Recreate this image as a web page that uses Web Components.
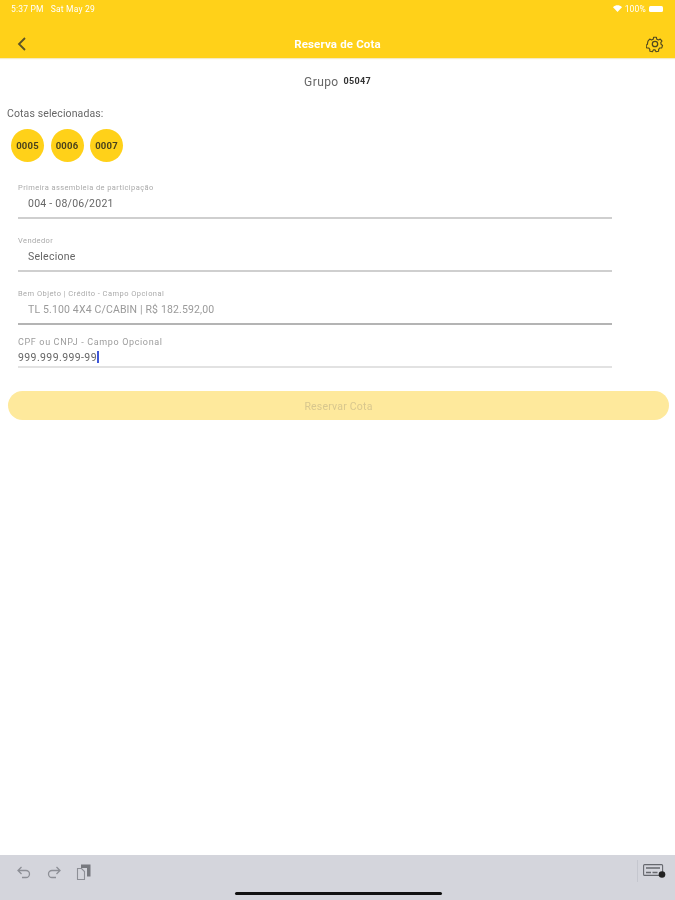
<!DOCTYPE html>
<html lang="pt-BR">
<head>
<meta charset="utf-8">
<title>Reserva de Cota</title>
<style>
  html, body { margin: 0; height: 100%; background: #fff; }
  body { font-family: Roboto, "Liberation Sans", sans-serif; }
</style>
</head>
<body>
<reserva-page>
  <status-bar slot="top"></status-bar>
  <nav-bar slot="top" title="Reserva de Cota"></nav-bar>

  <grupo-title numero="05047"></grupo-title>
  <cotas-list>
    <cota-chip>0005</cota-chip>
    <cota-chip>0006</cota-chip>
    <cota-chip>0007</cota-chip>
  </cotas-list>

  <form-field label="Primeira assembleia de participação" value="004 - 08/06/2021"></form-field>
  <form-field label="Vendedor" value="Selecione" style="--top: 16px"></form-field>
  <form-field label="Bem Objeto | Crédito - Campo Opcional" value="TL 5.100 4X4 C/CABIN | R$ 182.592,00"
    style="--top: 16px; --value-color: #9a9a9a; --value-ls: .15px; --line-color: #b4b4b4; --label-ls: .45px"></form-field>
  <form-field label="CPF ou CNPJ - Campo Opcional" value="999.999.999-99" editing
    style="--top: 12px; --label-size: 9px; --label-ls: .65px; --label-color: #9c9c9c; --value-left: 18px; --value-ls: .4px; --line-color: #e2e2e2; --gap: 3px; --bottom: 1px"></form-field>

  <reserve-button>Reservar Cota</reserve-button>

  <keyboard-bar slot="bottom"></keyboard-bar>
</reserva-page>

<script>
class ReservaPage extends HTMLElement {
  constructor() {
    super();
    this.attachShadow({ mode: "open" });
    this.shadowRoot.innerHTML = `
      <style>
        :host { display: flex; flex-direction: column; height: 900px; overflow: hidden; background: #fff; color: #444; filter: blur(.4px); }
        header { background: #ffd119; height: 58px; box-shadow: 0 1px 1px rgba(240, 225, 170, .7); display: flex; flex-direction: column; }
        main { flex: 1; display: flex; flex-direction: column; }
      </style>
      <header><slot name="top"></slot></header>
      <main><slot></slot></main>
      <slot name="bottom"></slot>
    `;
  }
}

class StatusBar extends HTMLElement {
  constructor() {
    super();
    this.attachShadow({ mode: "open" });
    this.shadowRoot.innerHTML = `
      <style>
        :host { display: flex; justify-content: space-between; align-items: center; height: 17px; margin-bottom: 13px; padding: 0 12px 0 11px; color: #fff; font-size: 8.5px; letter-spacing: .2px; }
        div { display: flex; align-items: center; gap: 7px; }
        .right { gap: 3px; }
        .battery { width: 14px; height: 6px; background: #fff; border-radius: 1.5px; }
      </style>
      <div><span>5:37 PM</span><span>Sat May 29</span></div>
      <div class="right">
        <svg width="9" height="7" viewBox="0 0 9 7"><path d="M0 2.2C2.6-.4 6.4-.4 9 2.2L4.5 7z" fill="#fff"/></svg>
        <span>100%</span>
        <span class="battery"></span>
      </div>
    `;
  }
}

class NavBar extends HTMLElement {
  constructor() {
    super();
    this.attachShadow({ mode: "open" });
    this.shadowRoot.innerHTML = `
      <style>
        :host { display: grid; grid-template-columns: 1fr auto 1fr; align-items: center; flex: 1; padding: 0 11px; }
        h1 { margin: 0; font-size: 11.5px; font-weight: 700; letter-spacing: .15px; color: #fff; }
        svg { display: block; }
        .back { margin-left: 6px; }
        .settings { justify-self: end; }
      </style>
      <svg class="back" width="10" height="16" viewBox="0 0 10 16" fill="none" stroke="#5c5326" stroke-width="1.8"><path d="M8 2 2 8l6 6"/></svg>
      <h1></h1>
      <svg class="settings" width="18" height="18" viewBox="0 0 24 24" fill="none" stroke="#51491f" stroke-width="1.7" stroke-linejoin="round">
        <path d="M10 2h4l.7 3 2.4 1.1 2.7-1.5 2.6 3-1.8 2.4.4 2.5 2.2 1.6-1.2 3.7-2.9.1-1.7 2-.1 2.9-3.8.6-1.3-2.6h-2.7l-1.3 2.6-3.8-.6-.1-2.9-1.7-2-2.9-.1-1.2-3.7 2.2-1.6.4-2.5L1.6 7.6l2.6-3 2.7 1.5L9.3 5z" transform="translate(1.2 1.2) scale(.9)"/>
        <circle cx="12" cy="12" r="3.6"/>
      </svg>
    `;
    this.shadowRoot.querySelector("h1").textContent = this.getAttribute("title");
  }
}

class GrupoTitle extends HTMLElement {
  constructor() {
    super();
    this.attachShadow({ mode: "open" });
    this.shadowRoot.innerHTML = `
      <style>
        :host { display: flex; justify-content: center; align-items: flex-start; gap: 5px; padding-top: 17px; height: 16px; color: #666; font-size: 12px; letter-spacing: .4px; }
        b { font-size: 9px; color: #333; letter-spacing: .3px; padding-top: 1px; }
      </style>
      <span>Grupo</span><b></b>
    `;
    this.shadowRoot.querySelector("b").textContent = this.getAttribute("numero");
  }
}

class CotasList extends HTMLElement {
  constructor() {
    super();
    this.attachShadow({ mode: "open" });
    this.shadowRoot.innerHTML = `
      <style>
        :host { display: block; padding: 16px 0 0 7px; }
        p { margin: 0; height: 13px; line-height: 13px; font-size: 10.5px; letter-spacing: .12px; color: #666; }
        div { display: flex; gap: 6.5px; padding: 9px 0 0 4px; margin-bottom: 20px; }
      </style>
      <p>Cotas selecionadas:</p>
      <div><slot></slot></div>
    `;
  }
}

class CotaChip extends HTMLElement {
  constructor() {
    super();
    this.attachShadow({ mode: "open" });
    this.shadowRoot.innerHTML = `
      <style>
        :host { display: flex; align-items: center; justify-content: center; width: 33px; height: 33px; border-radius: 50%; background: #ffd119; color: #4b431c; font-size: 9.5px; letter-spacing: .2px; font-weight: 700; }
      </style>
      <slot></slot>
    `;
  }
}

class FormField extends HTMLElement {
  constructor() {
    super();
    this.attachShadow({ mode: "open" });
    this.shadowRoot.innerHTML = `
      <style>
        :host { display: block; margin: var(--top, 0) 63px 0 18px; border-bottom: 2px solid var(--line-color, #cfcfcf); padding-bottom: var(--bottom, 6px); }
        label { display: block; height: 11px; line-height: 11px; font-size: var(--label-size, 7.5px); letter-spacing: var(--label-ls, .4px); color: var(--label-color, #aaa); }
        div { height: 14px; line-height: 14px; margin-top: var(--gap, 4px); padding-left: calc(var(--value-left, 28px) - 18px); font-size: 10.5px; letter-spacing: var(--value-ls, .25px); color: var(--value-color, #666); white-space: nowrap; }
        i { display: inline-block; width: 2px; height: 12px; background: #3f57d8; vertical-align: -2px; }
      </style>
      <label></label>
      <div><span></span></div>
    `;
    this.shadowRoot.querySelector("label").textContent = this.getAttribute("label");
    this.shadowRoot.querySelector("span").textContent = this.getAttribute("value");
    if (this.hasAttribute("editing")) {
      this.shadowRoot.querySelector("div").appendChild(document.createElement("i"));
    }
  }
}

class ReserveButton extends HTMLElement {
  constructor() {
    super();
    this.attachShadow({ mode: "open" });
    this.shadowRoot.innerHTML = `
      <style>
        :host { display: flex; align-items: center; justify-content: center; height: 29px; margin: 23px 6px 0 8px; border-radius: 15px; background: #fee99c; color: #d8c78e; font-size: 10.5px; letter-spacing: .2px; padding-top: 1px; box-sizing: border-box; }
      </style>
      <slot></slot>
    `;
  }
}

class KeyboardBar extends HTMLElement {
  constructor() {
    super();
    this.attachShadow({ mode: "open" });
    this.shadowRoot.innerHTML = `
      <style>
        :host { display: flex; align-items: flex-start; position: relative; height: 45px; background: #d4d5dc; box-sizing: border-box; padding: 9px 9px 0 16px; }
        svg { display: block; }
        .tools { display: flex; gap: 14px; flex: 1; }
        .sep { width: 1px; height: 22px; margin: -4px 5px 0 0; background: #c5c7cf; }
        .home { position: absolute; left: 235px; top: 37px; width: 207px; height: 3px; border-radius: 2px; background: #111; }
      </style>
      <div class="tools">
        <svg width="16" height="16" viewBox="0 0 16 16" fill="none" stroke="#8d8f96" stroke-width="1.3"><path d="M5.5 3 2 6.5 5.500 10M2 6.500h8a3.500 3.500 0 0 1 0 7H6"/></svg>
        <svg width="16" height="16" viewBox="0 0 16 16" fill="none" stroke="#8d8f96" stroke-width="1.3"><path d="M10.500 3 14 6.500 10.500 10M14 6.500H6a3.500 3.500 0 0 0 0 7h4"/></svg>
        <svg width="16" height="16" viewBox="0 0 16 16">
          <path d="M5 0.500h9.500v12H11V4H5z" fill="#77797f"/>
          <path d="M1.500 4.500h4l3 3v8h-7z" fill="#d4d5dc" stroke="#8d8f96" stroke-width="1.100"/>
        </svg>
      </div>
      <span class="sep"></span>
      <svg width="23" height="15" viewBox="0 0 23 15" fill="none">
        <rect x=".6" y=".6" width="19" height="10.800" rx="1" stroke="#66686e" stroke-width="1.100"/>
        <path d="M3 4h14M3 8.500h5M9.500 8.500h5" stroke="#66686e" stroke-width="1.300"/>
        <circle cx="19" cy="10.500" r="3.300" fill="#222"/>
      </svg>
      <span class="home"></span>
    `;
  }
}

customElements.define("reserva-page", ReservaPage);
customElements.define("status-bar", StatusBar);
customElements.define("nav-bar", NavBar);
customElements.define("grupo-title", GrupoTitle);
customElements.define("cotas-list", CotasList);
customElements.define("cota-chip", CotaChip);
customElements.define("form-field", FormField);
customElements.define("reserve-button", ReserveButton);
customElements.define("keyboard-bar", KeyboardBar);
</script>
</body>
</html>
